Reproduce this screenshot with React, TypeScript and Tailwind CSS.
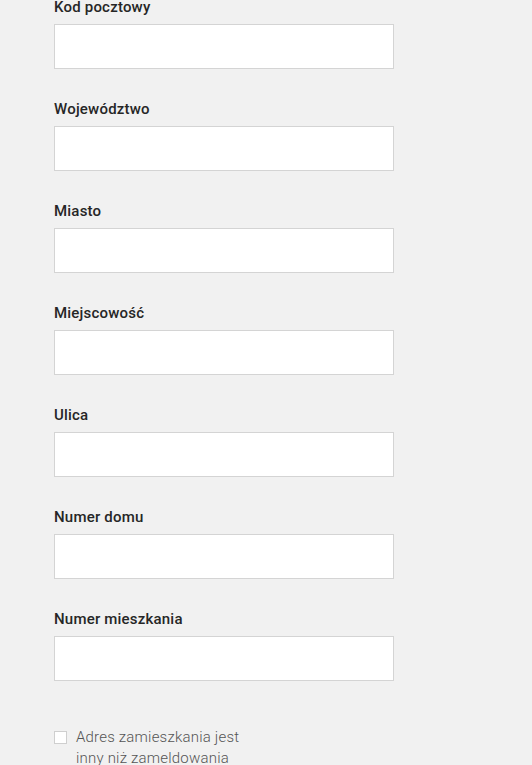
const fields = [
  "Kod pocztowy",
  "Województwo",
  "Miasto",
  "Miejscowość",
  "Ulica",
  "Numer domu",
  "Numer mieszkania",
];

export default function App() {
  return (
    <div
      className="min-h-[765px] w-full overflow-hidden bg-[#f1f1f1]"
      style={{ fontFamily: "Roboto, 'Liberation Sans', sans-serif" }}
    >
      <div className="-mt-[3px] pl-[54px]">
        {fields.map((f) => (
          <div key={f} className="mb-[30px]">
            <label className="mb-[7px] block text-[15px] leading-[20px] font-medium tracking-[0.2px] text-[#262626]">
              {f}
            </label>
            <input
              type="text"
              className="block h-[45px] w-[340px] border border-[#d4d4d4] bg-white px-3 text-[15px] outline-none"
            />
          </div>
        ))}

        <label className="mt-[46px] flex items-start">
          <span className="mt-[4px] mr-[9px] block h-[13px] w-[13px] shrink-0 border border-[#cfcfcf] bg-white" />
          <span className="w-[175px] text-[15px] leading-[21px] font-light tracking-[0.2px] text-[#555]">
            Adres zamieszkania jest inny niż zameldowania
          </span>
        </label>
      </div>
    </div>
  );
}
